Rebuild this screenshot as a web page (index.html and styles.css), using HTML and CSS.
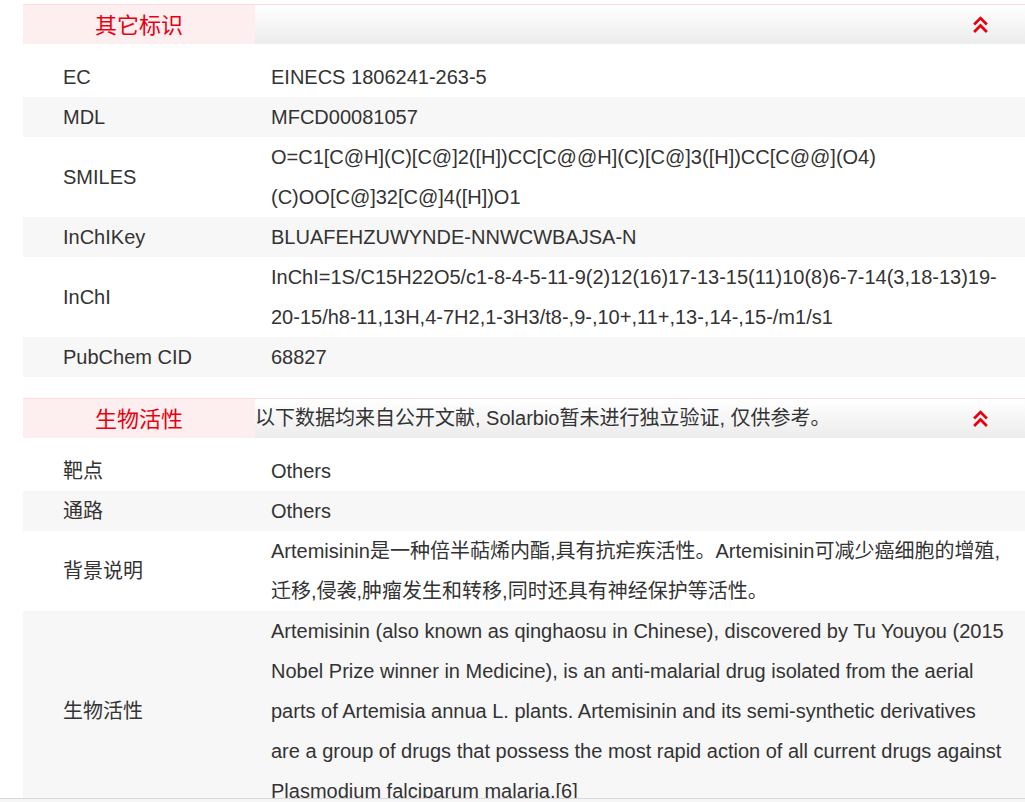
FILE: index.html
```html
<!DOCTYPE html>
<html lang="zh-CN">
<head>
  <meta charset="UTF-8">
  <title>Artemisinin | 其它标识 / 生物活性</title>
  <link rel="stylesheet" href="styles.css">
</head>
<body>

  <!-- 其它标识 -->
  <div class="section">
    <div class="section-head">
      <div class="section-title">其它标识</div>
      <div class="section-note"></div>
      <span class="toggle">
        <svg viewBox="0 0 16 16"><polyline points="2,8 8,2 14,8" /><polyline points="2,15 8,9 14,15" /></svg>
      </span>
    </div>
    <table class="info">
      <tr><td class="key">EC</td><td class="val">EINECS 1806241-263-5</td></tr>
      <tr><td class="key">MDL</td><td class="val">MFCD00081057</td></tr>
      <tr><td class="key">SMILES</td><td class="val">O=C1[C@H](C)[C@]2([H])CC[C@@H](C)[C@]3([H])CC[C@@](O4)<br>(C)OO[C@]32[C@]4([H])O1</td></tr>
      <tr><td class="key">InChIKey</td><td class="val">BLUAFEHZUWYNDE-NNWCWBAJSA-N</td></tr>
      <tr><td class="key">InChI</td><td class="val">InChI=1S/C15H22O5/c1-8-4-5-11-9(2)12(16)17-13-15(11)10(8)6-7-14(3,18-13)19-<br>20-15/h8-11,13H,4-7H2,1-3H3/t8-,9-,10+,11+,13-,14-,15-/m1/s1</td></tr>
      <tr><td class="key">PubChem CID</td><td class="val">68827</td></tr>
    </table>
  </div>

  <!-- 生物活性 -->
  <div class="section">
    <div class="section-head">
      <div class="section-title">生物活性</div>
      <div class="section-note">以下数据均来自公开文献, Solarbio暂未进行独立验证, 仅供参考。</div>
      <span class="toggle">
        <svg viewBox="0 0 16 16"><polyline points="2,8 8,2 14,8" /><polyline points="2,15 8,9 14,15" /></svg>
      </span>
    </div>
    <table class="info">
      <tr><td class="key">靶点</td><td class="val">Others</td></tr>
      <tr><td class="key">通路</td><td class="val">Others</td></tr>
      <tr><td class="key">背景说明</td><td class="val">Artemisinin是一种倍半萜烯内酯,具有抗疟疾活性。Artemisinin可减少癌细胞的增殖,<br>迁移,侵袭,肿瘤发生和转移,同时还具有神经保护等活性。</td></tr>
      <tr><td class="key">生物活性</td><td class="val">Artemisinin (also known as qinghaosu in Chinese), discovered by Tu Youyou (2015 Nobel Prize winner in Medicine), is an anti-malarial drug isolated from the aerial parts of Artemisia annua L. plants. Artemisinin and its semi-synthetic derivatives are a group of drugs that possess the most rapid action of all current drugs against Plasmodium falciparum malaria.[6]</td></tr>
    </table>
  </div>

  <div class="bottom-bar"></div>

</body>
</html>
```

FILE: styles.css
```css
body {
  margin: 0;
  padding: 4px 0 0 23px;
  background: #fff;
  color: #333;
  font-family: "Liberation Sans", Arial, "Noto Sans CJK SC", sans-serif;
  font-size: 20px;
  overflow: hidden;
}

/* One block per topic */
.section {
  width: 1002px;
  margin-bottom: 21px;
}

/* Header strip: pink title cell + grey gradient */
.section-head {
  display: flex;
  align-items: center;
  height: 39px;
  border-top: 1px solid #fcdcdc;
  background: linear-gradient(to bottom, #ffffff 0%, #ececec 100%);
}

.section-title {
  width: 232px;
  height: 100%;
  box-sizing: border-box;
  padding-bottom: 3px;
  line-height: 36px;
  text-align: center;
  background: #fdeeef;
  color: #e8000f;
  font-size: 22px;
  font-family: "Noto Sans CJK SC", sans-serif;
}

.section-note {
  flex: 1;
  line-height: 39px;
  white-space: nowrap;
}

.toggle {
  width: 17px;
  height: 17px;
  margin-right: 36px;
  display: flex;
}

.toggle svg {
  width: 17px;
  height: 17px;
  fill: none;
  stroke: #e8000f;
  stroke-width: 2.6;
}

/* Key / value rows */
.info {
  width: 100%;
  margin-top: 13px;
  border-collapse: collapse;
}

.info tr:nth-child(even) {
  background: #f7f7f7;
}

.info td {
  padding: 0;
  line-height: 40px;
  vertical-align: middle;
}

.info .key {
  width: 192px;
  padding-left: 40px;
}

.info .val {
  padding-left: 16px;
  padding-right: 18px;
}

/* Strip along the window bottom */
.bottom-bar {
  position: fixed;
  left: 0;
  right: 0;
  bottom: 0;
  height: 3px;
  border-top: 1px solid #d8d8d8;
  background: #f6f6f6;
}
```
